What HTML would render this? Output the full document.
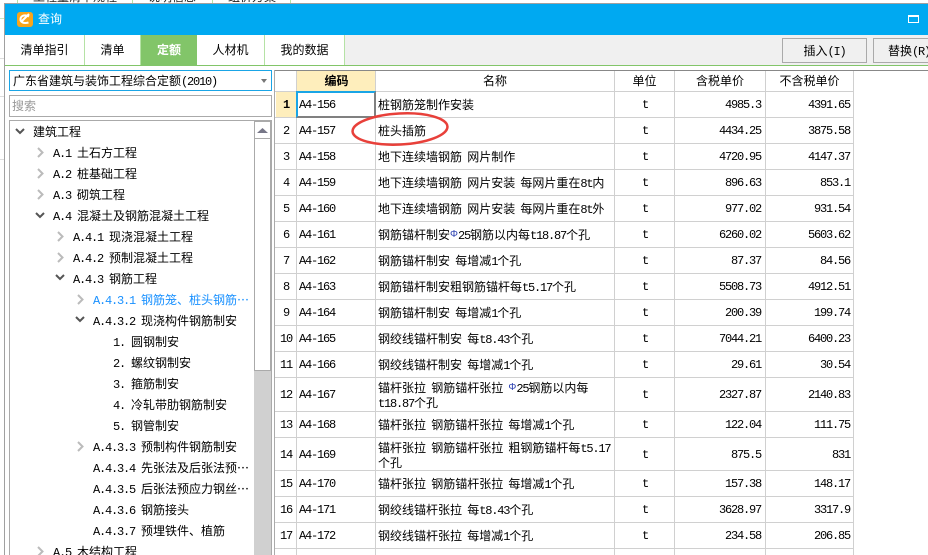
<!DOCTYPE html>
<html lang="zh"><head><meta charset="utf-8"><style>
html,body{margin:0;padding:0;background:#fff}
#p{position:relative;width:928px;height:555px;overflow:hidden;background:#fff;font:12px/14px "WenQuanYi Zen Hei","Noto Sans CJK SC",sans-serif;color:#000;word-spacing:2.5px}
#p div{position:absolute;white-space:nowrap}
.m{font:12px/14px "Liberation Mono",monospace;letter-spacing:-1.2px;word-spacing:0}
.f{display:inline-block;width:8px;font:10px/14px "Liberation Sans",sans-serif;color:#2a3fb0;vertical-align:top}
.tab{top:35px;height:30px;background:#fff;border-right:1px solid #b5e2a5;text-align:center;line-height:30px;font-size:12px;box-sizing:border-box}
.l{left:275px;width:579px;height:1px;background:#d0d0d0}
.v{top:71px;height:484px;width:1px;background:#d0d0d0}
.u{text-align:center;width:60px;left:615px}
.r{text-align:right;font:12px/14px "Liberation Mono",monospace;letter-spacing:-1.2px;transform:translateX(-1px)}
.n{left:276px;width:20px;text-align:center;font:12px/14px "Liberation Mono",monospace;letter-spacing:-1.2px}
</style></head><body><div id="p">
<div style="left:33px;top:-10px;height:13px;overflow:hidden;color:#222">工程量清单规程</div>
<div style="left:148px;top:-10px;height:13px;overflow:hidden;color:#222">说明信息</div>
<div style="left:228px;top:-10px;height:13px;overflow:hidden;color:#222">组价方案</div>
<div style="left:17px;top:0;width:1px;height:3px;background:#b5e2a5"></div>
<div style="left:132px;top:0;width:1px;height:3px;background:#b5e2a5"></div>
<div style="left:212px;top:0;width:1px;height:3px;background:#b5e2a5"></div>
<div style="left:290px;top:0;width:1px;height:3px;background:#b5e2a5"></div>
<div style="left:0;top:18px;width:4px;height:1px;background:#c9e8c0"></div>
<div style="left:0;top:58px;width:4px;height:1px;background:#ddd"></div>
<div style="left:0;top:96px;width:4px;height:1px;background:#ddd"></div>
<div style="left:0;top:159px;width:4px;height:1px;background:#ddd"></div>
<div style="left:4px;top:3px;width:924px;height:1px;background:#a0a0a0"></div>
<div style="left:4px;top:3px;width:1px;height:552px;background:#a0a0a0"></div>
<div style="left:5px;top:4px;width:923px;height:31px;background:#00a9f1"></div>
<div style="left:17px;top:12px;width:16px;height:15px;background:#f9a51a;border-radius:3px"></div>
<svg style="position:absolute;left:17px;top:12px" width="16" height="15" viewBox="0 0 16 15"><path d="M12 4.500C9 2.500 4 3 3.500 7c-.3 3 3 5 8 3.500M5 9l7-7" fill="none" stroke="#fff" stroke-width="2"/></svg>
<div style="left:38px;top:12px;color:#fff;font-size:12px">查询</div>
<svg style="position:absolute;left:908px;top:15px" width="11" height="8"><path d="M0 0h11v8H0zM1 2v5h9V2z" fill="#fff" fill-rule="evenodd"/></svg>

<div style="left:5px;top:35px;width:923px;height:30px;background:#f0f0f0"></div>
<div class="tab" style="left:5px;width:80px">清单指引</div>
<div class="tab" style="left:85px;width:56px">清单</div>
<div class="tab" style="left:141px;width:56px;background:#82c569;color:#fff;font-weight:bold;border:0">定额</div>
<div class="tab" style="left:197px;width:68px">人材机</div>
<div class="tab" style="left:265px;width:80px">我的数据</div>
<div style="left:782px;top:38px;width:83px;height:23px;border:1px solid #aaa;text-align:center;line-height:23px;background:#f0f0f0">插入<span class="m">(I)</span></div>
<div style="left:873px;top:38px;width:70px;height:23px;border:1px solid #aaa;line-height:23px;background:#f0f0f0;padding-left:14px">替换<span class="m">(R)</span></div>
<div style="left:5px;top:65px;width:923px;height:1px;background:#82c569"></div>

<div style="left:9px;top:70px;width:258px;height:19px;border:1px solid #1aa5e6;line-height:20px;padding-left:3px">广东省建筑与装饰工程综合定额<span class="m">(2010)</span></div>
<svg style="position:absolute;left:260px;top:79px" width="8" height="5"><path d="M1 0h6l-3 4z" fill="#777"/></svg>
<div style="left:9px;top:95px;width:259px;height:20px;border:1px solid #aaa;line-height:20px;color:#999;padding-left:2px">搜索</div>

<div style="left:9px;top:120px;width:263px;height:440px;border:1px solid #aaa;box-sizing:border-box;background:#fff"></div>
<div style="left:254px;top:121px;width:17px;height:434px;background:#d0d0d0"></div>
<div style="left:254px;top:121px;width:17px;height:250px;background:#fff;border:1px solid #aaa;box-sizing:border-box"></div>
<svg style="position:absolute;left:254px;top:121px" width="17" height="18"><rect x=".5" y=".5" width="16" height="17" fill="#fff" stroke="#aaa"/><path d="M3 12l5.500-5 5.500 5z" fill="#778"/></svg>
<div style="left:274px;top:70px;width:654px;height:1px;background:#888"></div>
<div style="left:274px;top:70px;width:1px;height:485px;background:#aaa"></div>

<svg style="position:absolute;left:0;top:120px" width="254" height="435" fill="none" stroke-width="2">
<g stroke="#555"><path d="M16 9l4 4 4-4M36 93l4 4 4-4M56 155l4 4 4-4M76 197l4 4 4-4"/></g>
<g stroke="#bbb"><path d="M38 28l4.500 4.500-4.500 4.500M38 49l4.500 4.500-4.500 4.500M38 70l4.500 4.500-4.500 4.500M58 112l4.500 4.500-4.500 4.500M58 133l4.500 4.500-4.500 4.500M78 175l4.500 4.500-4.500 4.500M78 322l4.500 4.500-4.500 4.500M38 427l4.500 4.500-4.500 4.500"/></g></svg>

<div style="left:33px;top:125px">建筑工程</div>
<div style="left:53px;top:146px"><span class="m">A.1</span></div><div style="left:77px;top:146px">土石方工程</div>
<div style="left:53px;top:167px"><span class="m">A.2</span></div><div style="left:77px;top:167px">桩基础工程</div>
<div style="left:53px;top:188px"><span class="m">A.3</span></div><div style="left:77px;top:188px">砌筑工程</div>
<div style="left:53px;top:209px"><span class="m">A.4</span></div><div style="left:77px;top:209px">混凝土及钢筋混凝土工程</div>
<div style="left:73px;top:230px"><span class="m">A.4.1</span></div><div style="left:109px;top:230px">现浇混凝土工程</div>
<div style="left:73px;top:251px"><span class="m">A.4.2</span></div><div style="left:109px;top:251px">预制混凝土工程</div>
<div style="left:73px;top:272px"><span class="m">A.4.3</span></div><div style="left:109px;top:272px">钢筋工程</div>
<div style="left:93px;top:293px;color:#1890ff"><span class="m">A.4.3.1</span></div><div style="left:141px;top:293px;color:#1890ff">钢筋笼、桩头钢筋…</div>
<div style="left:93px;top:314px"><span class="m">A.4.3.2</span></div><div style="left:141px;top:314px">现浇构件钢筋制安</div>
<div style="left:113px;top:335px"><span class="m">1.</span></div><div style="left:131px;top:335px">圆钢制安</div>
<div style="left:113px;top:356px"><span class="m">2.</span></div><div style="left:131px;top:356px">螺纹钢制安</div>
<div style="left:113px;top:377px"><span class="m">3.</span></div><div style="left:131px;top:377px">箍筋制安</div>
<div style="left:113px;top:398px"><span class="m">4.</span></div><div style="left:131px;top:398px">冷轧带肋钢筋制安</div>
<div style="left:113px;top:419px"><span class="m">5.</span></div><div style="left:131px;top:419px">钢管制安</div>
<div style="left:93px;top:440px"><span class="m">A.4.3.3</span></div><div style="left:141px;top:440px">预制构件钢筋制安</div>
<div style="left:93px;top:461px"><span class="m">A.4.3.4</span></div><div style="left:141px;top:461px">先张法及后张法预…</div>
<div style="left:93px;top:482px"><span class="m">A.4.3.5</span></div><div style="left:141px;top:482px">后张法预应力钢丝…</div>
<div style="left:93px;top:503px"><span class="m">A.4.3.6</span></div><div style="left:141px;top:503px">钢筋接头</div>
<div style="left:93px;top:524px"><span class="m">A.4.3.7</span></div><div style="left:141px;top:524px">预埋铁件、植筋</div>
<div style="left:53px;top:545px"><span class="m">A.5</span></div><div style="left:77px;top:545px">木结构工程</div>

<div style="left:297px;top:71px;width:79px;height:20px;background:#feeebc;text-align:center;line-height:20px;font-weight:bold">编码</div>
<div style="left:276px;top:92px;width:20px;height:25px;background:#feeebc"></div>

<div class="v" style="left:296px"></div><div class="v" style="left:375px"></div><div class="v" style="left:614px"></div><div class="v" style="left:674px"></div><div class="v" style="left:765px"></div><div class="v" style="left:853px"></div>
<div class="l" style="top:91px"></div><div class="l" style="top:117px"></div><div class="l" style="top:143px"></div><div class="l" style="top:169px"></div><div class="l" style="top:195px"></div><div class="l" style="top:221px"></div><div class="l" style="top:247px"></div><div class="l" style="top:273px"></div><div class="l" style="top:299px"></div><div class="l" style="top:325px"></div><div class="l" style="top:351px"></div><div class="l" style="top:377px"></div><div class="l" style="top:411px"></div><div class="l" style="top:437px"></div><div class="l" style="top:470px"></div><div class="l" style="top:496px"></div><div class="l" style="top:522px"></div><div class="l" style="top:548px"></div>

<div style="left:376px;top:71px;width:238px;text-align:center;line-height:20px">名称</div>
<div style="left:615px;top:71px;width:59px;text-align:center;line-height:20px">单位</div>
<div style="left:675px;top:71px;width:90px;text-align:center;line-height:20px">含税单价</div>
<div style="left:766px;top:71px;width:87px;text-align:center;line-height:20px">不含税单价</div>

<div style="left:296px;top:91px;width:80px;height:27px;border:2px solid #808080;border-top-color:#1aa5e6;border-left-color:#1aa5e6;box-sizing:border-box"></div>

<div class="n" style="top:98px;font-weight:bold">1</div><div class="m" style="left:299px;top:98px">A4-156</div><div style="left:378px;top:98px">桩钢筋笼制作安装</div><div class="u m" style="top:98px">t</div><div class="r" style="left:675px;width:87px;top:98px">4985.3</div><div class="r" style="left:766px;width:85px;top:98px">4391.65</div>
<div class="n" style="top:124px">2</div><div class="m" style="left:299px;top:124px">A4-157</div><div style="left:378px;top:124px">桩头插筋</div><div class="u m" style="top:124px">t</div><div class="r" style="left:675px;width:87px;top:124px">4434.25</div><div class="r" style="left:766px;width:85px;top:124px">3875.58</div>
<div class="n" style="top:150px">3</div><div class="m" style="left:299px;top:150px">A4-158</div><div style="left:378px;top:150px">地下连续墙钢筋 网片制作</div><div class="u m" style="top:150px">t</div><div class="r" style="left:675px;width:87px;top:150px">4720.95</div><div class="r" style="left:766px;width:85px;top:150px">4147.37</div>
<div class="n" style="top:176px">4</div><div class="m" style="left:299px;top:176px">A4-159</div><div style="left:378px;top:176px">地下连续墙钢筋 网片安装 每网片重在<span class="m">8t</span>内</div><div class="u m" style="top:176px">t</div><div class="r" style="left:675px;width:87px;top:176px">896.63</div><div class="r" style="left:766px;width:85px;top:176px">853.1</div>
<div class="n" style="top:202px">5</div><div class="m" style="left:299px;top:202px">A4-160</div><div style="left:378px;top:202px">地下连续墙钢筋 网片安装 每网片重在<span class="m">8t</span>外</div><div class="u m" style="top:202px">t</div><div class="r" style="left:675px;width:87px;top:202px">977.02</div><div class="r" style="left:766px;width:85px;top:202px">931.54</div>
<div class="n" style="top:228px">6</div><div class="m" style="left:299px;top:228px">A4-161</div><div style="left:378px;top:228px">钢筋锚杆制安<span class="f">Φ</span><span class="m">25</span>钢筋以内每<span class="m">t18.87</span>个孔</div><div class="u m" style="top:228px">t</div><div class="r" style="left:675px;width:87px;top:228px">6260.02</div><div class="r" style="left:766px;width:85px;top:228px">5603.62</div>
<div class="n" style="top:254px">7</div><div class="m" style="left:299px;top:254px">A4-162</div><div style="left:378px;top:254px">钢筋锚杆制安 每增减<span class="m">1</span>个孔</div><div class="u m" style="top:254px">t</div><div class="r" style="left:675px;width:87px;top:254px">87.37</div><div class="r" style="left:766px;width:85px;top:254px">84.56</div>
<div class="n" style="top:280px">8</div><div class="m" style="left:299px;top:280px">A4-163</div><div style="left:378px;top:280px">钢筋锚杆制安粗钢筋锚杆每<span class="m">t5.17</span>个孔</div><div class="u m" style="top:280px">t</div><div class="r" style="left:675px;width:87px;top:280px">5508.73</div><div class="r" style="left:766px;width:85px;top:280px">4912.51</div>
<div class="n" style="top:306px">9</div><div class="m" style="left:299px;top:306px">A4-164</div><div style="left:378px;top:306px">钢筋锚杆制安 每增减<span class="m">1</span>个孔</div><div class="u m" style="top:306px">t</div><div class="r" style="left:675px;width:87px;top:306px">200.39</div><div class="r" style="left:766px;width:85px;top:306px">199.74</div>
<div class="n" style="top:332px">10</div><div class="m" style="left:299px;top:332px">A4-165</div><div style="left:378px;top:332px">钢绞线锚杆制安 每<span class="m">t8.43</span>个孔</div><div class="u m" style="top:332px">t</div><div class="r" style="left:675px;width:87px;top:332px">7044.21</div><div class="r" style="left:766px;width:85px;top:332px">6400.23</div>
<div class="n" style="top:358px">11</div><div class="m" style="left:299px;top:358px">A4-166</div><div style="left:378px;top:358px">钢绞线锚杆制安 每增减<span class="m">1</span>个孔</div><div class="u m" style="top:358px">t</div><div class="r" style="left:675px;width:87px;top:358px">29.61</div><div class="r" style="left:766px;width:85px;top:358px">30.54</div>
<div class="n" style="top:388px">12</div><div class="m" style="left:299px;top:388px">A4-167</div><div style="left:378px;top:381px">锚杆张拉 钢筋锚杆张拉 <span class="f">Φ</span><span class="m">25</span>钢筋以内每</div><div style="left:378px;top:396px"><span class="m">t18.87</span>个孔</div><div class="u m" style="top:388px">t</div><div class="r" style="left:675px;width:87px;top:388px">2327.87</div><div class="r" style="left:766px;width:85px;top:388px">2140.83</div>
<div class="n" style="top:418px">13</div><div class="m" style="left:299px;top:418px">A4-168</div><div style="left:378px;top:418px">锚杆张拉 钢筋锚杆张拉 每增减<span class="m">1</span>个孔</div><div class="u m" style="top:418px">t</div><div class="r" style="left:675px;width:87px;top:418px">122.04</div><div class="r" style="left:766px;width:85px;top:418px">111.75</div>
<div class="n" style="top:448px">14</div><div class="m" style="left:299px;top:448px">A4-169</div><div style="left:378px;top:441px">锚杆张拉 钢筋锚杆张拉 粗钢筋锚杆每<span class="m">t5.17</span></div><div style="left:378px;top:456px">个孔</div><div class="u m" style="top:448px">t</div><div class="r" style="left:675px;width:87px;top:448px">875.5</div><div class="r" style="left:766px;width:85px;top:448px">831</div>
<div class="n" style="top:477px">15</div><div class="m" style="left:299px;top:477px">A4-170</div><div style="left:378px;top:477px">锚杆张拉 钢筋锚杆张拉 每增减<span class="m">1</span>个孔</div><div class="u m" style="top:477px">t</div><div class="r" style="left:675px;width:87px;top:477px">157.38</div><div class="r" style="left:766px;width:85px;top:477px">148.17</div>
<div class="n" style="top:503px">16</div><div class="m" style="left:299px;top:503px">A4-171</div><div style="left:378px;top:503px">钢绞线锚杆张拉 每<span class="m">t8.43</span>个孔</div><div class="u m" style="top:503px">t</div><div class="r" style="left:675px;width:87px;top:503px">3628.97</div><div class="r" style="left:766px;width:85px;top:503px">3317.9</div>
<div class="n" style="top:529px">17</div><div class="m" style="left:299px;top:529px">A4-172</div><div style="left:378px;top:529px">钢绞线锚杆张拉 每增减<span class="m">1</span>个孔</div><div class="u m" style="top:529px">t</div><div class="r" style="left:675px;width:87px;top:529px">234.58</div><div class="r" style="left:766px;width:85px;top:529px">206.85</div>

<svg style="position:absolute;left:345px;top:105px" width="110" height="45"><ellipse cx="55" cy="24" rx="47.500" ry="15.500" transform="rotate(-3 55 24)" fill="none" stroke="#e8403a" stroke-width="2.500"/></svg>
</div></body></html>
